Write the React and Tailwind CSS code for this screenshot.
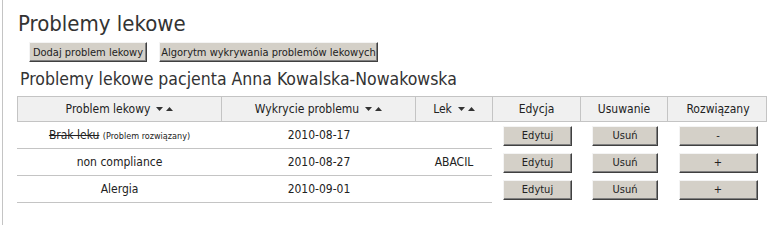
import React from "react";

const FONT = { fontFamily: '"DejaVu Sans Condensed", "DejaVu Sans", Tahoma, sans-serif' };

function Btn({ children, className = "" }) {
  return (
    <button
      className={
        "h-[20px] bg-[#d4d0c8] text-[11px] leading-none text-[#222] border border-t-[#f4f4f4] border-l-[#f4f4f4] border-b-[#404040] border-r-[#404040] shadow-[inset_-1px_-1px_0_#808080] flex items-center justify-center " +
        className
      }
    >
      {children}
    </button>
  );
}

function Sort() {
  return (
    <span className="inline-flex items-center gap-[3px] ml-[6px] align-middle">
      <svg width="7" height="4" viewBox="0 0 7 4"><path d="M0 0h7L3.5 4z" fill="#333" /></svg>
      <svg width="7" height="4" viewBox="0 0 7 4"><path d="M0 4h7L3.5 0z" fill="#333" /></svg>
    </span>
  );
}

const rows = [
  {
    name: (
      <span>
        <span className="line-through">Brak leku</span>{" "}
        <span className="text-[9px]">(Problem rozwiązany)</span>
      </span>
    ),
    date: "2010-08-17",
    lek: "",
    r: "-",
  },
  { name: "non compliance", date: "2010-08-27", lek: "ABACIL", r: "+" },
  { name: "Alergia", date: "2010-09-01", lek: "", r: "+" },
];

export default function App() {
  return (
    <div className="w-[783px] h-[225px] bg-white pl-[2px] text-[#222]" style={FONT}>
      <div className="h-full border-l border-[#c4c4c4] pt-[10px]">
        <h1 className="ml-[15px] text-[22px] leading-[28px] text-[#333]">Problemy lekowe</h1>
        <div className="flex gap-[12px] ml-[26px] mt-[4px]">
          <Btn className="w-[118px]">Dodaj problem lekowy</Btn>
          <Btn className="w-[219px]">Algorytm wykrywania problemów lekowych</Btn>
        </div>
        <h2 className="ml-[17px] mt-[5px] text-[17.5px] leading-[24px] text-[#333]">
          Problemy lekowe pacjenta Anna Kowalska-Nowakowska
        </h2>
        <div className="ml-[14px] mt-[5px] w-[750px]">
          <div className="grid grid-cols-[204px_194px_77px_88px_87px_100px] h-[26px] bg-[#f0f0f0] border border-[#c4c4c4] text-[12px]">
            <div className="flex items-center justify-center border-r border-[#c4c4c4]">Problem lekowy<Sort /></div>
            <div className="flex items-center justify-center border-r border-[#c4c4c4]">Wykrycie problemu<Sort /></div>
            <div className="flex items-center justify-center border-r border-[#c4c4c4]">Lek<Sort /></div>
            <div className="flex items-center justify-center border-r border-[#c4c4c4]">Edycja</div>
            <div className="flex items-center justify-center border-r border-[#c4c4c4]">Usuwanie</div>
            <div className="flex items-center justify-center">Rozwiązany</div>
          </div>
          {rows.map((row, i) => (
            <div key={i} className="grid grid-cols-[475px_88px_87px_100px] h-[27px] text-[12px]">
              <div className="grid grid-cols-[205px_194px_76px] border-b border-[#c4c4c4]">
                <div className="flex items-center justify-center">{row.name}</div>
                <div className="flex items-center justify-center">{row.date}</div>
                <div className="flex items-center justify-center">{row.lek}</div>
              </div>
              <div className="flex items-center justify-center pl-[3px]"><Btn className="w-[69px]">Edytuj</Btn></div>
              <div className="flex items-center justify-center pl-[3px]"><Btn className="w-[66px]">Usuń</Btn></div>
              <div className="flex items-center justify-center pl-[2px]"><Btn className="w-[79px]">{row.r}</Btn></div>
            </div>
          ))}
        </div>
      </div>
    </div>
  );
}
